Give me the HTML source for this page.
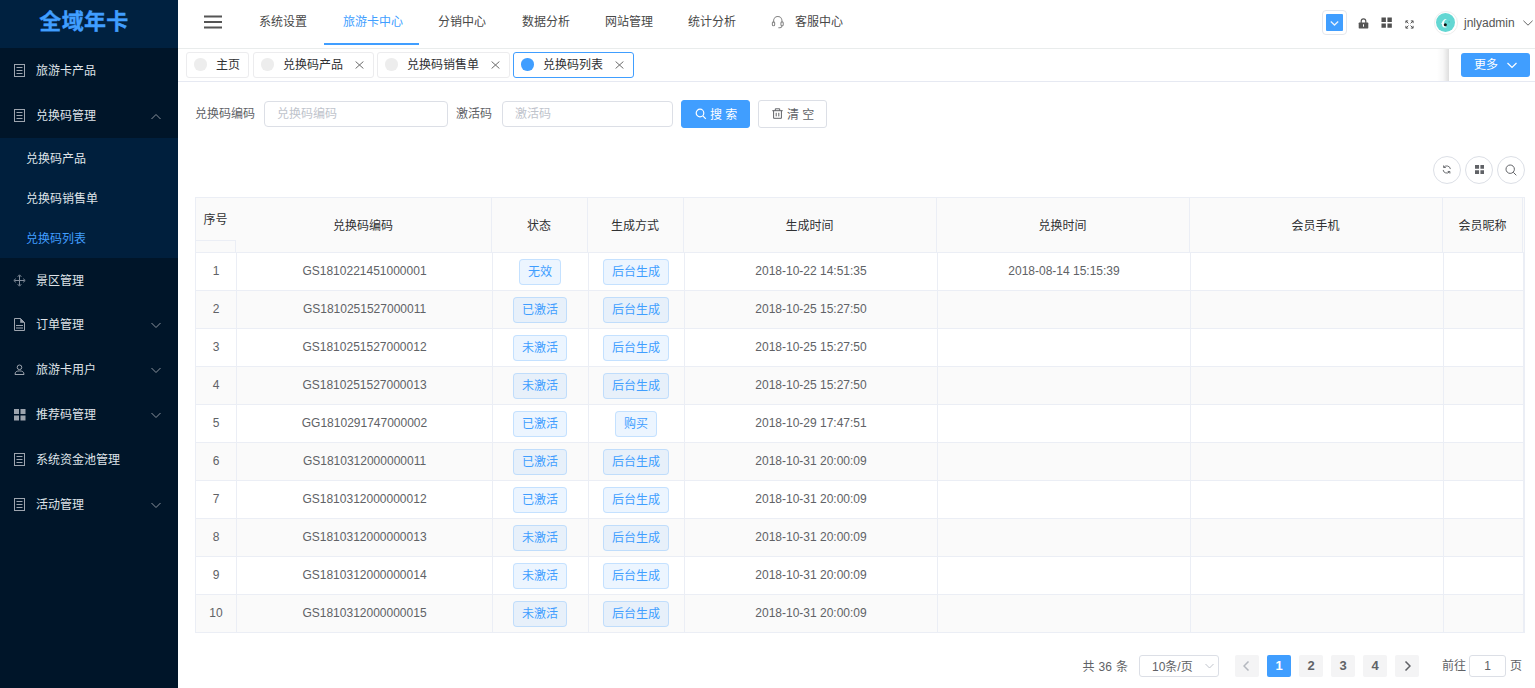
<!DOCTYPE html>
<html lang="zh-CN">
<head>
<meta charset="utf-8">
<title>全域年卡</title>
<style>
*{box-sizing:border-box;margin:0;padding:0}
html,body{width:1535px;height:688px;overflow:hidden;background:#fff}
body{font-family:"Liberation Sans","Noto Sans CJK SC",sans-serif;font-size:12px;color:#606266;position:relative}
.abs{position:absolute}
/* sidebar */
#side{position:absolute;left:0;top:0;width:178px;height:688px;background:#001529}
#logo{position:absolute;left:0;top:0;width:178px;height:48px;background:#002140;color:#409eff;font-size:22px;font-weight:bold;text-align:center;line-height:44px;letter-spacing:0.350px;padding-right:10px;-webkit-text-stroke:0.350px #409eff}
.mi{position:absolute;left:0;width:178px;height:45px;line-height:47px;color:#dfe3e8;font-size:12px;padding-left:36px;white-space:nowrap}
.mi svg.ic{position:absolute;left:13px;top:16px;width:13px;height:13px;opacity:.85}
.mi svg.ar{position:absolute;left:151px;top:19px;width:10px;height:10px}
#sub{position:absolute;left:0;top:138px;width:178px;height:120px;background:#001f3d}
.si{position:absolute;left:26px;height:40px;line-height:42px;color:#dfe3e8;font-size:12px;white-space:nowrap}
/* header */
#hd{position:absolute;left:178px;top:0;width:1357px;height:49px;background:#fff;border-bottom:1px solid #e9ecec}
.nv{position:absolute;top:0;height:48px;line-height:44px;font-size:12px;color:#484848;white-space:nowrap}
/* tabs */
#tb{position:absolute;left:178px;top:49px;width:1357px;height:33px;background:#fff;border-bottom:1px solid #e6e9f2}
.tab{position:absolute;top:52px;height:26px;border:1px solid #ececee;border-radius:3px;background:#fff;font-size:12px;color:#303133;line-height:24px;white-space:nowrap}
.tab i{position:absolute;left:7.300px;top:5.400px;width:12.400px;height:12.400px;border-radius:50%;background:#ededed}
.tab span{position:absolute;left:29px;top:0}
.tab svg{position:absolute;right:9.500px;top:7.800px;width:9px;height:8px}
.tab.on{border-color:#409eff}
.tab.on i{background:#409eff}
/* form */
.lb{position:absolute;font-size:12px;color:#606266;line-height:28px;top:100px;white-space:nowrap}
.inp{position:absolute;top:101px;height:26px;border:1px solid #dcdfe6;border-radius:4px;background:#fff;font-size:12px;color:#c0c4cc;line-height:24px;padding-left:12px}
.btn{position:absolute;top:100px;height:28px;border-radius:3px;font-size:12px;line-height:28px;white-space:nowrap}
/* table */
.cell{position:absolute;text-align:center;font-size:12px;color:#606266;white-space:nowrap}
.tag{display:inline-block;height:26px;line-height:24px;padding:0 7.500px;border:1px solid rgba(64,158,255,.23);border-radius:4px;background:rgba(64,158,255,.1);color:#409eff;font-size:12px}
.pg{position:absolute;top:655px;height:22px;width:24px;line-height:22px;text-align:center;background:#f4f4f5;border-radius:2px;font-size:13px;font-weight:bold;color:#606266}
</style>
</head>
<body>
<div id="side">
<div id="logo">全域年卡</div>
<div id="sub"></div>
<div class="mi" style="top:48px"><svg class="ic" viewBox="0 0 13 13"><rect x="1.5" y="0.5" width="10" height="12" fill="none" stroke="#b9bec6" stroke-width="1"/><path d="M3.5 3.5h6M3.5 6.5h6M3.5 9.5h6" stroke="#b9bec6" stroke-width="1" fill="none"/></svg>旅游卡产品</div>
<div class="mi" style="top:93px"><svg class="ic" viewBox="0 0 13 13"><rect x="1.5" y="0.5" width="10" height="12" fill="none" stroke="#b9bec6" stroke-width="1"/><path d="M3.5 3.5h6M3.5 6.5h6M3.5 9.5h6" stroke="#b9bec6" stroke-width="1" fill="none"/></svg>兑换码管理<svg class="ar" viewBox="0 0 10 10"><path d="M0.5 7l4.5-4.5 4.5 4.5" fill="none" stroke="#8a929c" stroke-width="1"/></svg></div>
<div class="mi" style="top:258px"><svg class="ic" viewBox="0 0 13 13"><path d="M6.500 1.500v10M1.500 6.500h10" stroke="#9aa3af" stroke-width="1" fill="none"/><path d="M4.700 2.800L6.500 0.800 8.300 2.800M4.700 10.200L6.500 12.200 8.300 10.200M2.800 4.700L0.800 6.500 2.800 8.300M10.200 4.700L12.200 6.500 10.200 8.300" stroke="#9aa3af" stroke-width="1" fill="none"/></svg>景区管理</div>
<div class="mi" style="top:302px"><svg class="ic" viewBox="0 0 13 13"><path d="M1.500 0.500h6l4 4v8h-10z" fill="none" stroke="#b9bec6" stroke-width="1"/><path d="M7.500 0.500v4h4z" fill="#b9bec6" stroke="#b9bec6" stroke-width="0.600"/><path d="M3 7.500h7M3 10h7" stroke="#b9bec6" stroke-width="1" fill="none"/></svg>订单管理<svg class="ar" style="top:17.500px" viewBox="0 0 10 10"><path d="M0.5 3l4.5 4.5 4.5-4.5" fill="none" stroke="#8a929c" stroke-width="1"/></svg></div>
<div class="mi" style="top:347px"><svg class="ic" viewBox="0 0 13 13"><circle cx="6.5" cy="4.3" r="2.3" fill="none" stroke="#b9bec6" stroke-width="1"/><path d="M2 11.5c0-2.800 1.800-3.600 4.500-3.600s4.500 0.800 4.500 3.600z" fill="none" stroke="#b9bec6" stroke-width="1"/></svg>旅游卡用户<svg class="ar" style="top:17.500px" viewBox="0 0 10 10"><path d="M0.5 3l4.5 4.5 4.5-4.5" fill="none" stroke="#8a929c" stroke-width="1"/></svg></div>
<div class="mi" style="top:392px"><svg class="ic" viewBox="0 0 13 13"><path d="M1 1h5v5h-5zM7.5 1h5v5h-5zM1 7.5h5v5h-5zM7.5 7.5h5v5h-5z" fill="#b9bec6"/></svg>推荐码管理<svg class="ar" style="top:17.500px" viewBox="0 0 10 10"><path d="M0.5 3l4.5 4.5 4.5-4.5" fill="none" stroke="#8a929c" stroke-width="1"/></svg></div>
<div class="mi" style="top:437px"><svg class="ic" viewBox="0 0 13 13"><rect x="1.5" y="0.5" width="10" height="12" fill="none" stroke="#b9bec6" stroke-width="1"/><path d="M3.5 3.5h6M3.5 6.5h6M3.5 9.5h6" stroke="#b9bec6" stroke-width="1" fill="none"/></svg>系统资金池管理</div>
<div class="mi" style="top:482px"><svg class="ic" viewBox="0 0 13 13"><rect x="1.5" y="0.5" width="10" height="12" fill="none" stroke="#b9bec6" stroke-width="1"/><path d="M3.5 3.5h6M3.5 6.5h6M3.5 9.5h6" stroke="#b9bec6" stroke-width="1" fill="none"/></svg>活动管理<svg class="ar" style="top:17.500px" viewBox="0 0 10 10"><path d="M0.5 3l4.5 4.5 4.5-4.5" fill="none" stroke="#8a929c" stroke-width="1"/></svg></div>
<div class="si" style="top:138px">兑换码产品</div>
<div class="si" style="top:178px">兑换码销售单</div>
<div class="si" style="top:218px;color:#409eff">兑换码列表</div>
</div>
<div id="hd">
<svg class="abs" style="left:26px;top:15px;width:18px;height:14px" viewBox="0 0 18 14"><path d="M0 1.5h18M0 7h18M0 12.5h18" stroke="#555" stroke-width="1.800" fill="none"/></svg>
<div class="nv" style="left:81px">系统设置</div>
<div class="nv" style="left:165px;color:#409eff">旅游卡中心</div>
<div class="nv" style="left:260px">分销中心</div>
<div class="nv" style="left:344px">数据分析</div>
<div class="nv" style="left:427px">网站管理</div>
<div class="nv" style="left:510px">统计分析</div>
<div class="nv" style="left:617px">客服中心</div>
<div class="abs" style="left:146px;top:43px;width:95px;height:2px;background:#409eff"></div>
<svg class="abs" style="left:592.8px;top:14.600px;width:13.600px;height:14.400px" viewBox="0 0 13 14" preserveAspectRatio="none"><path d="M2.500 7.500v-2a4 4 0 0 1 8 0v2" fill="none" stroke="#858585" stroke-width="1"/><rect x="1.300" y="6.500" width="2.200" height="4" rx="1.100" fill="none" stroke="#858585" stroke-width="1"/><rect x="9.500" y="6.500" width="2.200" height="4" rx="1.100" fill="none" stroke="#858585" stroke-width="1"/><path d="M10.500 10.500c0 1.500-1.500 2-3.500 2" fill="none" stroke="#858585" stroke-width="1"/></svg>
<div class="abs" style="left:1144px;top:10px;width:25px;height:25px;border:1px solid #e4e7ed;border-radius:4px;background:#fff"></div>
<div class="abs" style="left:1148px;top:14px;width:17px;height:17px;background:#409eff;border-radius:1px"><svg class="abs" style="left:4px;top:5.700px;width:9px;height:7px" viewBox="0 0 9 7"><path d="M0.800 1.500L4.500 5 8.200 1.500" fill="none" stroke="#e8f2ff" stroke-width="1.300"/></svg></div>
<svg class="abs" style="left:1180px;top:17.500px;width:11px;height:11px" viewBox="0 0 11 11"><rect x="0.700" y="4.600" width="9.600" height="5.800" rx="0.600" fill="#555"/><path d="M3.200 5v-1.800a2.300 2.300 0 0 1 4.600 0v1.800" fill="none" stroke="#555" stroke-width="1.200"/><rect x="5" y="6.300" width="1" height="2.400" fill="#fff"/></svg>
<svg class="abs" style="left:1203px;top:17.300px;width:11.500px;height:11.500px" viewBox="0 0 12 12"><path d="M0.500 0.500h4.600v4.600h-4.600zM6.700 0.500h4.600v4.600h-4.600zM0.500 6.700h4.600v4.600h-4.600zM6.700 6.700h4.600v4.600h-4.600z" fill="#505050"/></svg>
<svg class="abs" style="left:1227px;top:19.500px;width:9px;height:9px" viewBox="0 0 10 10"><path d="M1 3.500v-2.500h2.500M6.500 1h2.500v2.500M9 6.500v2.500h-2.500M3.500 9h-2.500v-2.500M1 1l2.800 2.800M9 1l-2.800 2.800M9 9l-2.800-2.800M1 9l2.800-2.800" fill="none" stroke="#555" stroke-width="1.100"/></svg>
<div class="abs" style="left:1255.9px;top:10.800px;width:23.800px;height:23.800px;border-radius:50%;border:1px solid #eee;background:#fff"></div>
<svg class="abs" style="left:1258.3px;top:13.200px;width:19px;height:19px" viewBox="0 0 20 20"><circle cx="10" cy="10" r="10" fill="#63d7d3"/><path d="M11.400 6.400C8.600 6 6.800 8 6.300 10.300L5 10.700L6.200 11.400C6.200 13.500 7 15 8.300 15.300L11.400 15.300C10 14.200 8.300 12.400 8.500 10.200C8.700 8.600 9.800 7.200 11.400 6.400z" fill="#f4fcfb"/><circle cx="9.800" cy="12.400" r="1.600" fill="#111"/><circle cx="13.800" cy="9.400" r="0.700" fill="#4aa8a4"/></svg>
<div class="abs" style="left:1286px;top:0;line-height:47px;font-size:12px;color:#555;white-space:nowrap">jnlyadmin</div>
<svg class="abs" style="left:1345px;top:19px;width:10px;height:8px" viewBox="0 0 10 8"><path d="M0.400 1.700l4.600 4.500 4.600-4.500" fill="none" stroke="#666" stroke-width="1"/></svg>
</div>
<div id="tb"></div>
<div class="tab" style="left:186px;width:63px"><i></i><span>主页</span></div>
<div class="tab" style="left:253px;width:121px"><i></i><span>兑换码产品</span><svg viewBox="0 0 9 8" preserveAspectRatio="none"><path d="M0.600 0.500l7.800 7M8.400 0.500l-7.800 7" stroke="#6b6b6b" stroke-width="1" fill="none"/></svg></div>
<div class="tab" style="left:377px;width:133px"><i></i><span>兑换码销售单</span><svg viewBox="0 0 9 8" preserveAspectRatio="none"><path d="M0.600 0.500l7.800 7M8.400 0.500l-7.800 7" stroke="#6b6b6b" stroke-width="1" fill="none"/></svg></div>
<div class="tab on" style="left:513px;width:121px"><i></i><span>兑换码列表</span><svg viewBox="0 0 9 8" preserveAspectRatio="none"><path d="M0.600 0.500l7.800 7M8.400 0.500l-7.800 7" stroke="#6b6b6b" stroke-width="1" fill="none"/></svg></div>
<div class="abs" style="left:1437px;top:49px;width:12px;height:32px;background:linear-gradient(to right,rgba(0,0,0,0),rgba(0,0,0,.03) 50%,rgba(0,0,0,.13))"></div><div class="abs" style="left:1449px;top:49px;width:86px;height:32px;background:#fff"></div>
<div class="abs" style="left:1461px;top:53px;width:69px;height:24px;background:#409eff;border-radius:3px;color:#fff;font-size:12px;line-height:25px;padding-left:13px">更多<svg class="abs" style="left:46px;top:8.500px;width:10px;height:7px" viewBox="0 0 10 7"><path d="M0.500 1l4.500 4.500 4.500-4.500" fill="none" stroke="#fff" stroke-width="1.200"/></svg></div>
<div class="lb" style="left:195px">兑换码编码</div>
<div class="inp" style="left:264px;width:184px">兑换码编码</div>
<div class="lb" style="left:456px">激活码</div>
<div class="inp" style="left:502px;width:171px">激活码</div>
<div class="btn" style="left:681px;width:69px;background:#409eff;border:1px solid #409eff;color:#fff;padding-left:28px"><svg class="abs" style="left:13px;top:7px;width:12px;height:12px" viewBox="0 0 12 12"><circle cx="5" cy="5" r="3.800" fill="none" stroke="#fff" stroke-width="1.200"/><path d="M7.800 7.800l3 3" stroke="#fff" stroke-width="1.200"/></svg>搜 索</div>
<div class="btn" style="left:758px;width:69px;background:#fff;border:1px solid #dcdfe6;color:#606266;padding-left:28px"><svg class="abs" style="left:12.800px;top:7.200px;width:11px;height:11px" viewBox="0 0 11 11"><path d="M0.300 2.700h10.400M3.300 2.700v-1.900h4.400v1.900M1.600 2.700v7.600h7.800v-7.600M4.200 4.800v3.600M6.800 4.800v3.600" fill="none" stroke="#606266" stroke-width="1"/></svg>清 空</div>
<div class="abs" style="left:1433px;top:156px;width:28px;height:28px;border:1px solid #dcdfe6;border-radius:50%;background:#fff"><svg class="abs" style="left:8.300px;top:8px;width:9.500px;height:9px" viewBox="0 0 10 10" preserveAspectRatio="none"><g transform="translate(10,0) scale(-1,1)"><path d="M1.200 4.500a3.800 3.800 0 0 1 6.800-2M8.800 5.500a3.800 3.800 0 0 1-6.800 2" fill="none" stroke="#606266" stroke-width="1"/><path d="M8.300 0.500v2.300h-2.300M1.700 9.500v-2.300h2.300" fill="none" stroke="#606266" stroke-width="1"/></g></svg></div>
<div class="abs" style="left:1465px;top:156px;width:28px;height:28px;border:1px solid #dcdfe6;border-radius:50%;background:#fff"><svg class="abs" style="left:8.600px;top:7.600px;width:9.500px;height:9px" viewBox="0 0 10 10" preserveAspectRatio="none"><path d="M0 0h4.300v4.300h-4.300zM5.700 0h4.300v4.300h-4.300zM0 5.700h4.300v4.300h-4.300zM5.700 5.700h4.300v4.300h-4.300z" fill="#606266"/></svg></div>
<div class="abs" style="left:1497px;top:156px;width:28px;height:28px;border:1px solid #dcdfe6;border-radius:50%;background:#fff"><svg class="abs" style="left:7px;top:7px;width:12px;height:12px" viewBox="0 0 12 12"><circle cx="5.200" cy="5.200" r="4.200" fill="none" stroke="#606266" stroke-width="1"/><path d="M8.300 8.300l3 3" stroke="#606266" stroke-width="1"/></svg></div>
<div class="abs" style="left:195px;top:197px;width:1330px;height:436px;border:1px solid #ebeef5;border-right:1px solid #ebeef5;background:#fff"></div>
<div class="abs" style="left:196px;top:198px;width:1328px;height:54px;background:#fafafa"></div>
<div class="abs" style="left:196px;top:291px;width:1328px;height:37px;background:#fafafa"></div>
<div class="abs" style="left:196px;top:367px;width:1328px;height:37px;background:#fafafa"></div>
<div class="abs" style="left:196px;top:443px;width:1328px;height:37px;background:#fafafa"></div>
<div class="abs" style="left:196px;top:519px;width:1328px;height:37px;background:#fafafa"></div>
<div class="abs" style="left:196px;top:595px;width:1328px;height:37px;background:#fafafa"></div>
<div class="abs" style="left:195px;top:252px;width:1330px;height:1px;background:#ebeef5"></div>
<div class="abs" style="left:195px;top:290px;width:1330px;height:1px;background:#ebeef5"></div>
<div class="abs" style="left:195px;top:328px;width:1330px;height:1px;background:#ebeef5"></div>
<div class="abs" style="left:195px;top:366px;width:1330px;height:1px;background:#ebeef5"></div>
<div class="abs" style="left:195px;top:404px;width:1330px;height:1px;background:#ebeef5"></div>
<div class="abs" style="left:195px;top:442px;width:1330px;height:1px;background:#ebeef5"></div>
<div class="abs" style="left:195px;top:480px;width:1330px;height:1px;background:#ebeef5"></div>
<div class="abs" style="left:195px;top:518px;width:1330px;height:1px;background:#ebeef5"></div>
<div class="abs" style="left:195px;top:556px;width:1330px;height:1px;background:#ebeef5"></div>
<div class="abs" style="left:195px;top:594px;width:1330px;height:1px;background:#ebeef5"></div>
<div class="abs" style="left:195px;top:632px;width:1330px;height:1px;background:#ebeef5"></div>
<div class="abs" style="left:235px;top:240px;width:1px;height:12px;background:#ebeef5"></div>
<div class="abs" style="left:236px;top:253px;width:1px;height:379px;background:#ebeef5"></div>
<div class="abs" style="left:491px;top:198px;width:1px;height:54px;background:#ebeef5"></div>
<div class="abs" style="left:492px;top:253px;width:1px;height:379px;background:#ebeef5"></div>
<div class="abs" style="left:587px;top:198px;width:1px;height:54px;background:#ebeef5"></div>
<div class="abs" style="left:588px;top:253px;width:1px;height:379px;background:#ebeef5"></div>
<div class="abs" style="left:683px;top:198px;width:1px;height:54px;background:#ebeef5"></div>
<div class="abs" style="left:684px;top:253px;width:1px;height:379px;background:#ebeef5"></div>
<div class="abs" style="left:936px;top:198px;width:1px;height:54px;background:#ebeef5"></div>
<div class="abs" style="left:937px;top:253px;width:1px;height:379px;background:#ebeef5"></div>
<div class="abs" style="left:1189px;top:198px;width:1px;height:54px;background:#ebeef5"></div>
<div class="abs" style="left:1190px;top:253px;width:1px;height:379px;background:#ebeef5"></div>
<div class="abs" style="left:1442px;top:198px;width:1px;height:54px;background:#ebeef5"></div>
<div class="abs" style="left:1443px;top:253px;width:1px;height:379px;background:#ebeef5"></div>
<div class="abs" style="left:1522px;top:198px;width:1px;height:54px;background:#ebeef5"></div>
<div class="abs" style="left:1523px;top:253px;width:1px;height:379px;background:#ebeef5"></div>
<div class="abs" style="left:196px;top:240px;width:40px;height:1px;background:#ebeef5"></div>
<div class="cell" style="left:195px;top:210px;width:41px;line-height:20px;color:#303133">序号</div>
<div class="cell" style="left:235px;top:216px;width:256px;line-height:20px;color:#303133">兑换码编码</div>
<div class="cell" style="left:491px;top:216px;width:96px;line-height:20px;color:#303133">状态</div>
<div class="cell" style="left:587px;top:216px;width:96px;line-height:20px;color:#303133">生成方式</div>
<div class="cell" style="left:683px;top:216px;width:253px;line-height:20px;color:#303133">生成时间</div>
<div class="cell" style="left:936px;top:216px;width:253px;line-height:20px;color:#303133">兑换时间</div>
<div class="cell" style="left:1189px;top:216px;width:253px;line-height:20px;color:#303133">会员手机</div>
<div class="cell" style="left:1442px;top:216px;width:81px;line-height:20px;color:#303133">会员昵称</div>
<div class="cell" style="left:196px;top:252px;width:40px;line-height:38px">1</div>
<div class="cell" style="left:237px;top:252px;width:255px;line-height:38px">GS1810221451000001</div>
<div class="cell" style="left:492.5px;top:259px;width:95px;line-height:26px"><span class="tag">无效</span></div>
<div class="cell" style="left:588.5px;top:259px;width:95px;line-height:26px"><span class="tag">后台生成</span></div>
<div class="cell" style="left:685px;top:252px;width:252px;line-height:38px">2018-10-22 14:51:35</div>
<div class="cell" style="left:938px;top:252px;width:252px;line-height:38px">2018-08-14 15:15:39</div>
<div class="cell" style="left:196px;top:290px;width:40px;line-height:38px">2</div>
<div class="cell" style="left:237px;top:290px;width:255px;line-height:38px">GS1810251527000011</div>
<div class="cell" style="left:492.5px;top:297px;width:95px;line-height:26px"><span class="tag">已激活</span></div>
<div class="cell" style="left:588.5px;top:297px;width:95px;line-height:26px"><span class="tag">后台生成</span></div>
<div class="cell" style="left:685px;top:290px;width:252px;line-height:38px">2018-10-25 15:27:50</div>
<div class="cell" style="left:196px;top:328px;width:40px;line-height:38px">3</div>
<div class="cell" style="left:237px;top:328px;width:255px;line-height:38px">GS1810251527000012</div>
<div class="cell" style="left:492.5px;top:335px;width:95px;line-height:26px"><span class="tag">未激活</span></div>
<div class="cell" style="left:588.5px;top:335px;width:95px;line-height:26px"><span class="tag">后台生成</span></div>
<div class="cell" style="left:685px;top:328px;width:252px;line-height:38px">2018-10-25 15:27:50</div>
<div class="cell" style="left:196px;top:366px;width:40px;line-height:38px">4</div>
<div class="cell" style="left:237px;top:366px;width:255px;line-height:38px">GS1810251527000013</div>
<div class="cell" style="left:492.5px;top:373px;width:95px;line-height:26px"><span class="tag">未激活</span></div>
<div class="cell" style="left:588.5px;top:373px;width:95px;line-height:26px"><span class="tag">后台生成</span></div>
<div class="cell" style="left:685px;top:366px;width:252px;line-height:38px">2018-10-25 15:27:50</div>
<div class="cell" style="left:196px;top:404px;width:40px;line-height:38px">5</div>
<div class="cell" style="left:237px;top:404px;width:255px;line-height:38px">GG1810291747000002</div>
<div class="cell" style="left:492.5px;top:411px;width:95px;line-height:26px"><span class="tag">已激活</span></div>
<div class="cell" style="left:588.5px;top:411px;width:95px;line-height:26px"><span class="tag">购买</span></div>
<div class="cell" style="left:685px;top:404px;width:252px;line-height:38px">2018-10-29 17:47:51</div>
<div class="cell" style="left:196px;top:442px;width:40px;line-height:38px">6</div>
<div class="cell" style="left:237px;top:442px;width:255px;line-height:38px">GS1810312000000011</div>
<div class="cell" style="left:492.5px;top:449px;width:95px;line-height:26px"><span class="tag">已激活</span></div>
<div class="cell" style="left:588.5px;top:449px;width:95px;line-height:26px"><span class="tag">后台生成</span></div>
<div class="cell" style="left:685px;top:442px;width:252px;line-height:38px">2018-10-31 20:00:09</div>
<div class="cell" style="left:196px;top:480px;width:40px;line-height:38px">7</div>
<div class="cell" style="left:237px;top:480px;width:255px;line-height:38px">GS1810312000000012</div>
<div class="cell" style="left:492.5px;top:487px;width:95px;line-height:26px"><span class="tag">已激活</span></div>
<div class="cell" style="left:588.5px;top:487px;width:95px;line-height:26px"><span class="tag">后台生成</span></div>
<div class="cell" style="left:685px;top:480px;width:252px;line-height:38px">2018-10-31 20:00:09</div>
<div class="cell" style="left:196px;top:518px;width:40px;line-height:38px">8</div>
<div class="cell" style="left:237px;top:518px;width:255px;line-height:38px">GS1810312000000013</div>
<div class="cell" style="left:492.5px;top:525px;width:95px;line-height:26px"><span class="tag">未激活</span></div>
<div class="cell" style="left:588.5px;top:525px;width:95px;line-height:26px"><span class="tag">后台生成</span></div>
<div class="cell" style="left:685px;top:518px;width:252px;line-height:38px">2018-10-31 20:00:09</div>
<div class="cell" style="left:196px;top:556px;width:40px;line-height:38px">9</div>
<div class="cell" style="left:237px;top:556px;width:255px;line-height:38px">GS1810312000000014</div>
<div class="cell" style="left:492.5px;top:563px;width:95px;line-height:26px"><span class="tag">未激活</span></div>
<div class="cell" style="left:588.5px;top:563px;width:95px;line-height:26px"><span class="tag">后台生成</span></div>
<div class="cell" style="left:685px;top:556px;width:252px;line-height:38px">2018-10-31 20:00:09</div>
<div class="cell" style="left:196px;top:594px;width:40px;line-height:38px">10</div>
<div class="cell" style="left:237px;top:594px;width:255px;line-height:38px">GS1810312000000015</div>
<div class="cell" style="left:492.5px;top:601px;width:95px;line-height:26px"><span class="tag">未激活</span></div>
<div class="cell" style="left:588.5px;top:601px;width:95px;line-height:26px"><span class="tag">后台生成</span></div>
<div class="cell" style="left:685px;top:594px;width:252px;line-height:38px">2018-10-31 20:00:09</div>
<div class="abs" style="left:1082.500px;top:655px;line-height:24px;font-size:12px;color:#606266;white-space:nowrap;word-spacing:0.700px">共 36 条</div>
<div class="abs" style="left:1139px;top:655px;width:80px;height:22px;border:1px solid #dcdfe6;border-radius:3px;line-height:22px;font-size:12px;color:#606266;padding-left:12px;white-space:nowrap">10条/页<svg class="abs" style="left:65px;top:7px;width:9px;height:7px" viewBox="0 0 9 7"><path d="M0.500 1l4 4 4-4" fill="none" stroke="#c0c4cc" stroke-width="1"/></svg></div>
<div class="pg" style="left:1235px"><svg class="abs" style="left:8px;top:6px;width:7px;height:10px" viewBox="0 0 7 10"><path d="M5.500 0.500l-4.500 4.500 4.500 4.500" fill="none" stroke="#b4b8bf" stroke-width="1.500"/></svg></div>
<div class="pg" style="left:1267px;background:#409eff;color:#fff;">1</div>
<div class="pg" style="left:1299px;">2</div>
<div class="pg" style="left:1331px;">3</div>
<div class="pg" style="left:1363px;">4</div>
<div class="pg" style="left:1395px"><svg class="abs" style="left:9px;top:6px;width:7px;height:10px" viewBox="0 0 7 10"><path d="M1.500 0.500l4.500 4.500-4.500 4.500" fill="none" stroke="#606266" stroke-width="1.500"/></svg></div>
<div class="abs" style="left:1442px;top:654px;line-height:24px;font-size:12px;color:#606266;white-space:nowrap">前往</div>
<div class="abs" style="left:1469px;top:655px;width:37px;height:22px;border:1px solid #dcdfe6;border-radius:3px;line-height:20px;font-size:12px;color:#606266;text-align:center">1</div>
<div class="abs" style="left:1510px;top:654px;line-height:24px;font-size:12px;color:#606266;white-space:nowrap">页</div>
</body>
</html>
